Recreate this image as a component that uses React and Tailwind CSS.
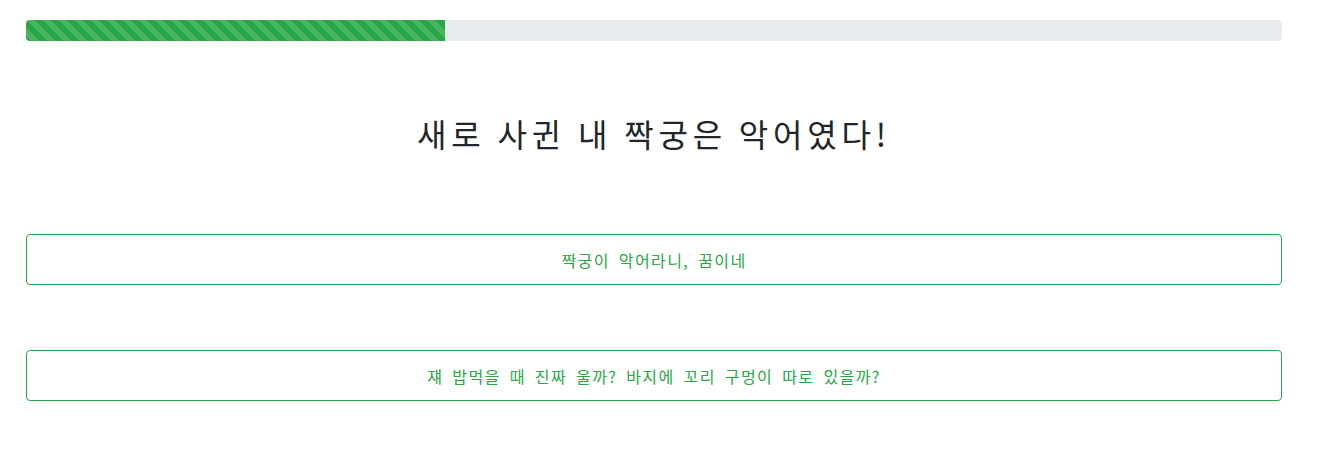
export default function App() {
  const progress = 33.36

  return (
    <div className="min-h-[451px] bg-white pt-[20px] pl-[26px] pr-[35px] font-['Noto_Sans_CJK_KR','Noto_Sans',sans-serif]">
      <div className="h-[21px] w-full overflow-hidden rounded-[4px] bg-[#e9ecef]">
        <div
          className="h-full bg-[#28a745] bg-[linear-gradient(45deg,rgba(255,255,255,.15)_25%,transparent_25%,transparent_50%,rgba(255,255,255,.15)_50%,rgba(255,255,255,.15)_75%,transparent_75%,transparent)] bg-[length:16px_16px]"
          style={{ width: `${progress}%` }}
        />
      </div>

      <h2 className="mt-[70px] text-center text-[32px] leading-[44px] tracking-[4.8px] text-[#212529]">
        새로 사귄 내 짝궁은 악어였다!
      </h2>

      <div className="mt-[79px] flex flex-col gap-[65px]">
        <button className="h-[51px] w-full rounded-[4px] border border-[#28a745] bg-white text-[16px] tracking-[1.4px] [word-spacing:4px] text-[#28a745]">
          짝궁이 악어라니, 꿈이네
        </button>
        <button className="h-[51px] w-full rounded-[4px] border border-[#28a745] bg-white text-[16px] tracking-[1.4px] [word-spacing:4px] text-[#28a745]">
          쟤 밥먹을 때 진짜 울까? 바지에 꼬리 구멍이 따로 있을까?
        </button>
      </div>
    </div>
  )
}
